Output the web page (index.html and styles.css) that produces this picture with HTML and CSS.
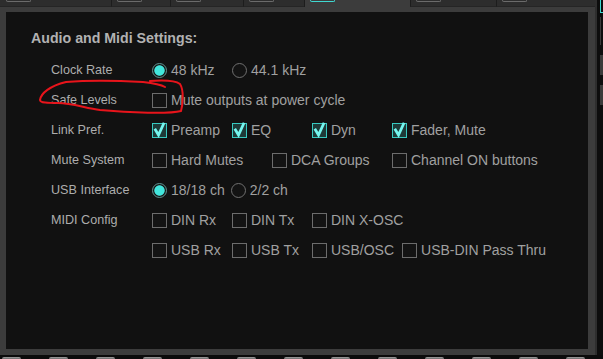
FILE: index.html
```html
<!DOCTYPE html>
<html lang="en">
<head>
    <meta charset="UTF-8">
    <title>Audio and Midi Settings</title>
    <link rel="stylesheet" href="styles.css">
</head>
<body>
    <div class="screen">
        <div class="top">
            <div class="main">
                <div class="tabs">
                    <div class="tab tab-1"><span class="stub"></span></div>
                    <div class="tab tab-2"><span class="stub"></span></div>
                    <div class="tab tab-3"><span class="stub"></span></div>
                    <div class="tab tab-4"><span class="stub"></span></div>
                    <div class="tab tab-5 active"><span class="stub"></span></div>
                    <div class="tab tab-6"><span class="stub"></span></div>
                    <div class="tab tab-7"><span class="stub"></span></div>
                </div>
                <div class="frame">
                    <div class="panel">
                        <h2 class="title">Audio and Midi Settings:</h2>
                        <div class="rows">
                            <div class="row">
                                <span class="label">Clock Rate</span>
                                <span class="opt"><span class="radio on"></span>48 kHz</span>
                                <span class="opt"><span class="radio"></span>44.1 kHz</span>
                            </div>
                            <div class="row">
                                <span class="label">Safe Levels</span>
                                <span class="opt"><span class="box"></span>Mute outputs at power cycle</span>
                            </div>
                            <div class="row">
                                <span class="label">Link Pref.</span>
                                <span class="opt"><span class="box checked"><svg viewBox="0 0 15 15"><polyline points="3.5,7 6.5,12 11.5,1"/></svg></span>Preamp</span>
                                <span class="opt"><span class="box checked"><svg viewBox="0 0 15 15"><polyline points="3.5,7 6.5,12 11.5,1"/></svg></span>EQ</span>
                                <span class="opt"><span class="box checked"><svg viewBox="0 0 15 15"><polyline points="3.5,7 6.5,12 11.5,1"/></svg></span>Dyn</span>
                                <span class="opt"><span class="box checked"><svg viewBox="0 0 15 15"><polyline points="3.5,7 6.5,12 11.5,1"/></svg></span>Fader, Mute</span>
                            </div>
                            <div class="row wide">
                                <span class="label">Mute System</span>
                                <span class="opt"><span class="box"></span>Hard Mutes</span>
                                <span class="opt"><span class="box"></span>DCA Groups</span>
                                <span class="opt"><span class="box"></span>Channel ON buttons</span>
                            </div>
                            <div class="row tight">
                                <span class="label">USB Interface</span>
                                <span class="opt"><span class="radio on"></span>18/18 ch</span>
                                <span class="opt"><span class="radio"></span>2/2 ch</span>
                            </div>
                            <div class="row">
                                <span class="label">MIDI Config</span>
                                <span class="opt"><span class="box"></span>DIN Rx</span>
                                <span class="opt"><span class="box"></span>DIN Tx</span>
                                <span class="opt"><span class="box"></span>DIN X-OSC</span>
                            </div>
                            <div class="row">
                                <span class="label"></span>
                                <span class="opt"><span class="box"></span>USB Rx</span>
                                <span class="opt"><span class="box"></span>USB Tx</span>
                                <span class="opt"><span class="box"></span>USB/OSC</span>
                                <span class="opt"><span class="box"></span>USB-DIN Pass Thru</span>
                            </div>
                        </div>
                    </div>
                </div>
            </div>
            <div class="side">
                <div class="side-cap"></div>
                <div class="side-line"></div>
                <div class="side-block"></div>
                <div class="side-block"></div>
            </div>
        </div>
        <div class="bottom">
            <span class="bump"></span><span class="bump"></span><span class="bump"></span>
            <span class="bump"></span><span class="bump"></span><span class="bump"></span>
            <span class="bump"></span><span class="bump"></span><span class="bump"></span>
            <span class="bump"></span><span class="bump"></span><span class="bump"></span>
            <span class="bump"></span>
        </div>

        <!-- hand drawn note over the Safe Levels row -->
        <svg class="scribble" viewBox="0 0 603 359">
            <path d="M150 81 C164 80 176 81 180 84 C184 90 183 104 181 111 C170 114 130 113 100 110 C85 108 72 103 58 103 C48 103 40 103 40 100 C41 93 50 86 66 82 C90 80 125 81 143 82 C152 83 160 84 165 87"/>
        </svg>
    </div>
</body>
</html>
```

FILE: styles.css
```css
body {
    margin: 0;
    background-color: #0b0b0b;
    font-family: "Liberation Sans", Arial, sans-serif;
}
.screen {
    position: relative;
    width: 603px;
    height: 359px;
    overflow: hidden;
}
.top {
    display: flex;
    height: 355px;
}
.main {
    width: 595px;
    display: flex;
    flex-direction: column;
}
.tabs {
    display: flex;
    height: 7px;
}
.tab {
    height: 6px;
    padding-left: 5px;
    background-color: #2d2d2d;
    border-left: 1px solid #1d1d1d;
    border-bottom: 1px solid #252525;
}
.tab-1 { width: 105px; padding-left: 6px; border-left: none; }
.tab-2 { width: 53px; }
.tab-3 { width: 67px; }
.tab-4 { width: 55px; }
.tab-5 { width: 100px; }
.tab-6 { width: 80px; }
.tab-7 { width: 93px; }
.tab.active {
    height: 7px;
    background-color: #3c3c3c;
    border-bottom: none;
}
.stub {
    display: block;
    width: 23px;
    height: 1px;
    border: 1px solid #6b6b6b;
    border-top: none;
    border-radius: 0 0 3px 3px;
}
.tab.active .stub {
    border-color: #3fd8d1;
}
.frame {
    flex: 1;
    display: flex;
    background-color: #3c3c3c;
    padding: 5px 7px 6px 6px;
}
.panel {
    flex: 1;
    background-color: #111111;
    padding: 18px 0 0 25px;
}
.title {
    margin: 0 0 9px;
    font-size: 14.2px;
    line-height: 16px;
    font-weight: bold;
    color: #b2b2b2;
}
.rows {
    padding-left: 20px;
}
.row {
    display: flex;
    align-items: center;
    height: 30px;
}
.label {
    width: 101px;
    font-size: 12.6px;
    color: #adadad;
}
.opt {
    display: flex;
    align-items: center;
    gap: 4px;
    min-width: 80px;
    padding-right: 8px;
    box-sizing: border-box;
    font-size: 14px;
    color: #a0a0a0;
    white-space: nowrap;
}
.wide .opt {
    min-width: 120px;
}
.tight .opt {
    min-width: 0;
    padding-right: 6px;
}
.box {
    position: relative;
    width: 15px;
    height: 15px;
    box-sizing: border-box;
    border: 1px solid #6c6c6c;
    background-color: #131313;
}
.box.checked {
    border-color: #38c9c1;
    background-color: #1d3a38;
}
.box svg {
    position: absolute;
    left: -1px;
    top: -1px;
    width: 15px;
    height: 15px;
    overflow: visible;
}
.box polyline {
    fill: none;
    stroke: #74f6ef;
    stroke-width: 2.8;
    stroke-linecap: square;
    stroke-linejoin: miter;
}
.radio {
    width: 15px;
    height: 15px;
    box-sizing: border-box;
    border-radius: 50%;
    border: 1px solid #707070;
    background-color: #131313;
}
.radio.on {
    border: 1.5px solid #5e9491;
    background: radial-gradient(circle, #42e6dc 0, #42e6dc 4.8px, #151515 5.6px);
}
.side {
    width: 6px;
    border-left: 2px solid #2e2e2e;
    background-color: #0d0d0d;
    padding-left: 3px;
}
.side-cap {
    height: 12px;
    border-left: 1px solid #3fd8d1;
    border-bottom: 1px solid #3fd8d1;
}
.side-line {
    height: 28px;
    margin-top: 4px;
    border-left: 1px solid #3a3a3a;
}
.side-block {
    height: 20px;
    margin-top: 10px;
    background-color: #3a3a3a;
}
.bottom {
    display: flex;
    gap: 28px;
    height: 4px;
    padding-left: 2px;
    background-color: #0b0b0b;
}
.bump {
    width: 19px;
    height: 2px;
    margin-top: 2px;
    border-radius: 2px 2px 0 0;
    background: linear-gradient(#a0a0a0, #6a6a6a);
}
.scribble {
    position: absolute;
    left: 0;
    top: 0;
    width: 603px;
    height: 359px;
    pointer-events: none;
}
.scribble path {
    fill: none;
    stroke: #e8141b;
    stroke-width: 2;
    stroke-linecap: round;
}
```
